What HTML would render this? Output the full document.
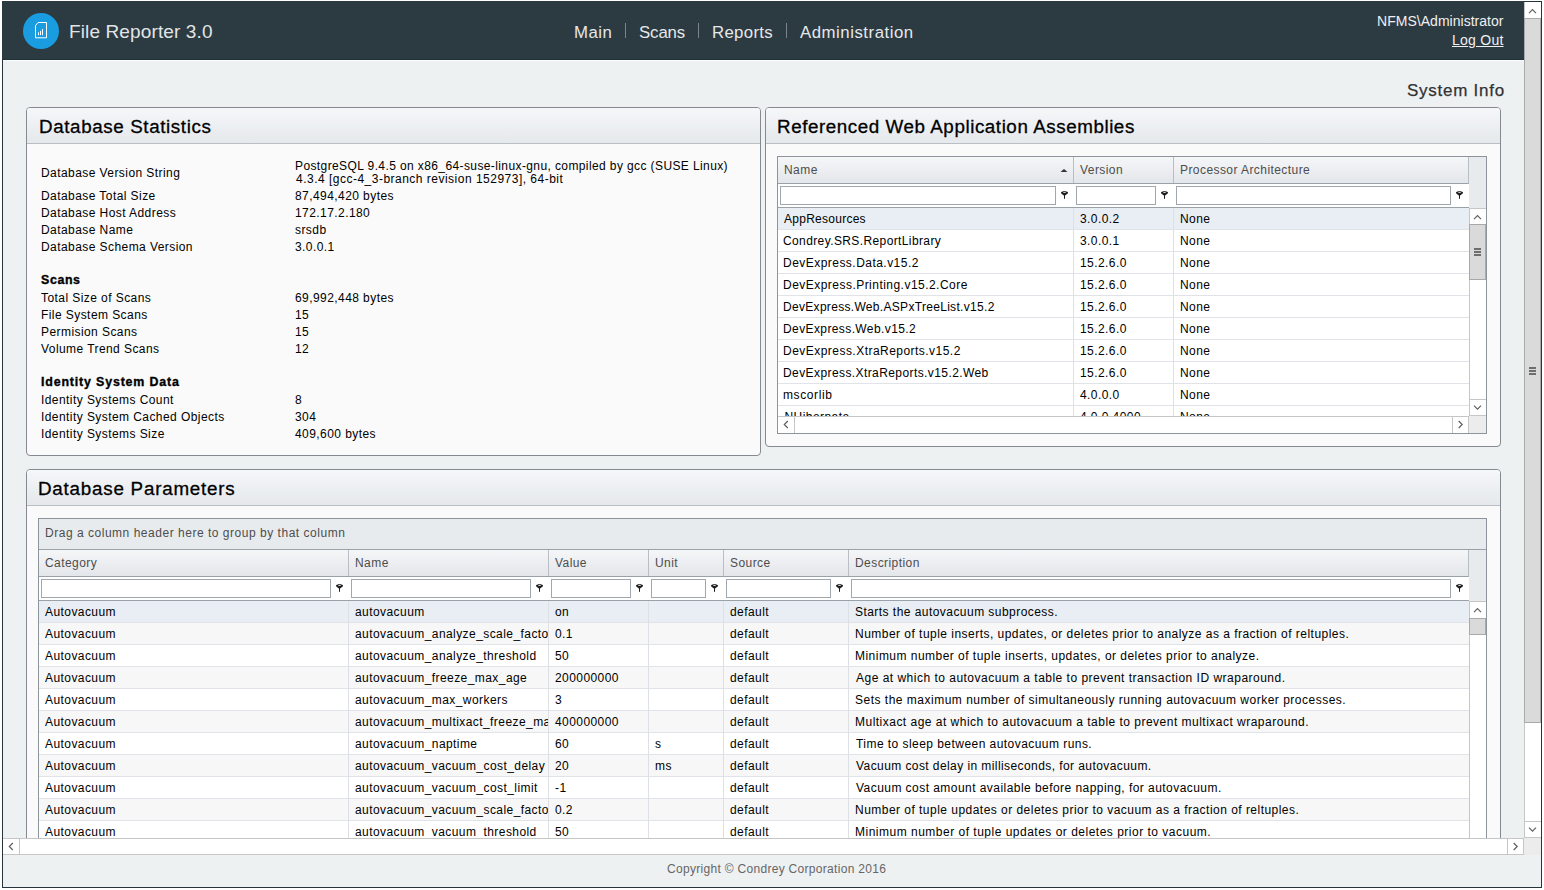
<!DOCTYPE html>
<html><head><meta charset="utf-8"><style>
*{box-sizing:border-box;margin:0;padding:0}
html,body{width:1544px;height:890px;overflow:hidden;background:#fff;font-family:"Liberation Sans",sans-serif;color:#000}
.a{position:absolute}
.t{position:absolute;white-space:nowrap}
.nav{font-size:17px;color:#f2f2f2;line-height:20px}
.sep{position:absolute;width:1px;height:15px;background:#76818a}
.panel{position:absolute;border:1px solid #858a90;border-radius:4px;background:#fafafa;overflow:hidden}
.ph{position:absolute;left:0;top:0;right:0;height:36px;background:linear-gradient(#f5f7f9,#e5e8ec);border-bottom:1px solid #b9bec4}
.lbl{font-size:12.8px;line-height:15px;color:#000}
.grid{position:absolute;border:1px solid #8d949c;background:#fff;overflow:hidden}
.gh{position:absolute;background:linear-gradient(#f5f6f8,#e3e6ea);border-bottom:1px solid #9ba1a8}
.ght{font-size:12.8px;line-height:15px;color:#4d4d4d}
.cd{position:absolute;width:1px;background:#c4c9cf}
.inp{position:absolute;height:19px;border:1px solid #a0a6ae;background:#fff}
.rowb{position:absolute;height:1px;background:#e1e5e9}
.cell{font-size:12.8px;line-height:15px;color:#000}
.arr{position:absolute;background:#fff}
</style></head><body>
<div class="a" style="left:2px;top:1px;width:1540px;height:887px;border:1px solid #26343c;background:#eef1f2"></div>
<div class="a" style="left:2px;top:1px;width:1522px;height:59px;background:#2c3a42;border-bottom:1px solid #22303a"></div>
<div class="a" style="left:3px;top:60px;width:1521px;height:1px;background:#fbfcfd"></div>
<div class="a" style="left:23px;top:13px;width:36px;height:36px;border-radius:50%;background:#1a9de0"></div>
<svg class="a" style="left:23px;top:13px" width="36" height="36" viewBox="0 0 36 36">
<path d="M12.5 12.6 L15 9.5 L23.5 9.5 L23.5 24.8 L12.5 24.8 Z" fill="none" stroke="#fff" stroke-width="1"/>
<rect x="15" y="19.3" width="1" height="2.8" fill="#fff"/>
<rect x="17" y="17.8" width="1" height="4.3" fill="#fff"/>
<rect x="19" y="16.1" width="1" height="6" fill="#fff"/>
</svg>
<div class="t" style="left:69px;top:20.22px;font-size:19px;line-height:23px;letter-spacing:0.125px;color:#e2e5e7">File Reporter 3.0</div>
<div class="t" style="left:574px;top:22.78px;font-size:16.8px;line-height:20px;letter-spacing:0.500px;color:#e6e8ea">Main</div>
<div class="t" style="left:639px;top:22.78px;font-size:16.8px;line-height:20px;letter-spacing:-0.100px;color:#e6e8ea">Scans</div>
<div class="t" style="left:712px;top:22.78px;font-size:16.8px;line-height:20px;letter-spacing:0.333px;color:#e6e8ea">Reports</div>
<div class="t" style="left:800px;top:22.78px;font-size:16.8px;line-height:20px;letter-spacing:0.523px;color:#e6e8ea">Administration</div>
<div class="a" style="left:625px;top:23px;width:1px;height:15px;background:#7a848c"></div>
<div class="a" style="left:698px;top:23px;width:1px;height:15px;background:#7a848c"></div>
<div class="a" style="left:786px;top:23px;width:1px;height:15px;background:#7a848c"></div>
<div class="t" style="left:1377px;top:12.65px;font-size:14px;line-height:17px;letter-spacing:0.029px;color:#f0f0f0">NFMS\Administrator</div>
<div class="t" style="left:1452px;top:31.65px;font-size:14px;line-height:17px;letter-spacing:0.250px;color:#f0f0f0;text-decoration:underline">Log Out</div>
<div class="t" style="left:1407px;top:81.11px;font-size:17px;line-height:20px;letter-spacing:0.740px;color:#333;-webkit-text-stroke:0.25px #333">System Info</div>
<div class="panel" style="left:26px;top:107px;width:735px;height:349px"><div class="ph"></div></div>
<div class="t" style="left:39px;top:114.99px;font-size:18.8px;line-height:23px;letter-spacing:0.617px;color:#000;-webkit-text-stroke:0.3px #000">Database Statistics</div>
<div class="t" style="left:41px;top:165.84px;font-size:12.0px;line-height:14px;letter-spacing:0.43px;color:#000">Database Version String</div>
<div class="t" style="left:41px;top:188.84px;font-size:12.0px;line-height:14px;letter-spacing:0.43px;color:#000">Database Total Size</div>
<div class="t" style="left:295px;top:188.84px;font-size:12.0px;line-height:14px;letter-spacing:0.43px;color:#000">87,494,420 bytes</div>
<div class="t" style="left:41px;top:205.84px;font-size:12.0px;line-height:14px;letter-spacing:0.43px;color:#000">Database Host Address</div>
<div class="t" style="left:295px;top:205.84px;font-size:12.0px;line-height:14px;letter-spacing:0.43px;color:#000">172.17.2.180</div>
<div class="t" style="left:41px;top:222.84px;font-size:12.0px;line-height:14px;letter-spacing:0.43px;color:#000">Database Name</div>
<div class="t" style="left:295px;top:222.84px;font-size:12.0px;line-height:14px;letter-spacing:0.43px;color:#000">srsdb</div>
<div class="t" style="left:41px;top:239.84px;font-size:12.0px;line-height:14px;letter-spacing:0.43px;color:#000">Database Schema Version</div>
<div class="t" style="left:295px;top:239.84px;font-size:12.0px;line-height:14px;letter-spacing:0.43px;color:#000">3.0.0.1</div>
<div class="t" style="left:41px;top:273.20px;font-size:12.4px;line-height:15px;letter-spacing:0.625px;font-weight:700;color:#000;-webkit-text-stroke:0.35px #000">Scans</div>
<div class="t" style="left:41px;top:290.84px;font-size:12.0px;line-height:14px;letter-spacing:0.43px;color:#000">Total Size of Scans</div>
<div class="t" style="left:295px;top:290.84px;font-size:12.0px;line-height:14px;letter-spacing:0.43px;color:#000">69,992,448 bytes</div>
<div class="t" style="left:41px;top:307.84px;font-size:12.0px;line-height:14px;letter-spacing:0.43px;color:#000">File System Scans</div>
<div class="t" style="left:295px;top:307.84px;font-size:12.0px;line-height:14px;letter-spacing:0.43px;color:#000">15</div>
<div class="t" style="left:41px;top:324.84px;font-size:12.0px;line-height:14px;letter-spacing:0.43px;color:#000">Permision Scans</div>
<div class="t" style="left:295px;top:324.84px;font-size:12.0px;line-height:14px;letter-spacing:0.43px;color:#000">15</div>
<div class="t" style="left:41px;top:341.84px;font-size:12.0px;line-height:14px;letter-spacing:0.43px;color:#000">Volume Trend Scans</div>
<div class="t" style="left:295px;top:341.84px;font-size:12.0px;line-height:14px;letter-spacing:0.43px;color:#000">12</div>
<div class="t" style="left:41px;top:375.20px;font-size:12.4px;line-height:15px;letter-spacing:0.842px;font-weight:700;color:#000;-webkit-text-stroke:0.35px #000">Identity System Data</div>
<div class="t" style="left:41px;top:392.84px;font-size:12.0px;line-height:14px;letter-spacing:0.43px;color:#000">Identity Systems Count</div>
<div class="t" style="left:295px;top:392.84px;font-size:12.0px;line-height:14px;letter-spacing:0.43px;color:#000">8</div>
<div class="t" style="left:41px;top:409.84px;font-size:12.0px;line-height:14px;letter-spacing:0.43px;color:#000">Identity System Cached Objects</div>
<div class="t" style="left:295px;top:409.84px;font-size:12.0px;line-height:14px;letter-spacing:0.43px;color:#000">304</div>
<div class="t" style="left:41px;top:426.84px;font-size:12.0px;line-height:14px;letter-spacing:0.43px;color:#000">Identity Systems Size</div>
<div class="t" style="left:295px;top:426.84px;font-size:12.0px;line-height:14px;letter-spacing:0.43px;color:#000">409,600 bytes</div>
<div class="t" style="left:295px;top:158.84px;font-size:12.0px;line-height:14px;letter-spacing:0.393px;color:#000">PostgreSQL 9.4.5 on x86_64-suse-linux-gnu, compiled by gcc (SUSE Linux)</div>
<div class="t" style="left:296px;top:171.84px;font-size:12.0px;line-height:14px;letter-spacing:0.489px;color:#000">4.3.4 [gcc-4_3-branch revision 152973], 64-bit</div>
<div class="panel" style="left:765px;top:107px;width:736px;height:340px"><div class="ph"></div></div>
<div class="t" style="left:777px;top:114.99px;font-size:18.8px;line-height:23px;letter-spacing:0.567px;color:#000;-webkit-text-stroke:0.3px #000">Referenced Web Application Assemblies</div>
<div class="a" style="left:777px;top:156px;width:710px;height:278px;border:1px solid #8d949c;background:#fff"></div>
<div class="a" style="left:1469px;top:157px;width:17px;height:51px;background:#e8ebee"></div>
<div class="a" style="left:778px;top:157px;width:691px;height:27px;background:linear-gradient(#f5f6f8,#e3e6ea);border-bottom:1px solid #9ba1a8;border-right:1px solid #b9bec4"></div>
<div class="a" style="left:1073px;top:157px;width:1px;height:26px;background:#b9bec4"></div>
<div class="a" style="left:1173px;top:157px;width:1px;height:26px;background:#b9bec4"></div>
<div class="t" style="left:784px;top:162.84px;font-size:12.0px;line-height:14px;letter-spacing:0.43px;color:#4d4d4d">Name</div>
<div class="t" style="left:1080px;top:162.84px;font-size:12.0px;line-height:14px;letter-spacing:0.43px;color:#4d4d4d">Version</div>
<div class="t" style="left:1180px;top:162.84px;font-size:12.0px;line-height:14px;letter-spacing:0.43px;color:#4d4d4d">Processor Architecture</div>
<svg class="a" style="left:1060px;top:169px" width="8" height="4"><path d="M0.5,3 L4,0 L7.5,3 Z" fill="#333"/></svg>
<div class="a" style="left:778px;top:184px;width:691px;height:24px;background:#fff;border-bottom:1px solid #9ba1a8"></div>
<div class="a" style="left:780px;top:186px;width:276px;height:19px;border:1px solid #a0a6ae;background:#fff"></div>
<div class="a" style="left:1076px;top:186px;width:80px;height:19px;border:1px solid #a0a6ae;background:#fff"></div>
<div class="a" style="left:1176px;top:186px;width:275px;height:19px;border:1px solid #a0a6ae;background:#fff"></div>
<div class="a" style="left:1060px;top:191px;width:9px;height:10px;line-height:0"><svg width="9" height="10" viewBox="0 0 9 10"><path d="M1,1.8 C1,0.8 2.5,0.3 4.5,0.3 C6.5,0.3 8,0.8 8,1.8 C8,2.6 6.4,3.6 5.1,4.6 L3.9,4.6 C2.6,3.6 1,2.6 1,1.8 Z" fill="#1e1e1e"/><ellipse cx="4.5" cy="1.5" rx="1.5" ry="0.5" fill="#d8d8d8"/><rect x="4" y="4" width="1" height="3.8" fill="#1e1e1e"/></svg></div>
<div class="a" style="left:1160px;top:191px;width:9px;height:10px;line-height:0"><svg width="9" height="10" viewBox="0 0 9 10"><path d="M1,1.8 C1,0.8 2.5,0.3 4.5,0.3 C6.5,0.3 8,0.8 8,1.8 C8,2.6 6.4,3.6 5.1,4.6 L3.9,4.6 C2.6,3.6 1,2.6 1,1.8 Z" fill="#1e1e1e"/><ellipse cx="4.5" cy="1.5" rx="1.5" ry="0.5" fill="#d8d8d8"/><rect x="4" y="4" width="1" height="3.8" fill="#1e1e1e"/></svg></div>
<div class="a" style="left:1455px;top:191px;width:9px;height:10px;line-height:0"><svg width="9" height="10" viewBox="0 0 9 10"><path d="M1,1.8 C1,0.8 2.5,0.3 4.5,0.3 C6.5,0.3 8,0.8 8,1.8 C8,2.6 6.4,3.6 5.1,4.6 L3.9,4.6 C2.6,3.6 1,2.6 1,1.8 Z" fill="#1e1e1e"/><ellipse cx="4.5" cy="1.5" rx="1.5" ry="0.5" fill="#d8d8d8"/><rect x="4" y="4" width="1" height="3.8" fill="#1e1e1e"/></svg></div>
<div class="a" style="left:778px;top:208px;width:691px;height:208px;overflow:hidden">
<div class="a" style="left:0;top:0px;width:691px;height:22px;background:#e8eef4;border-bottom:1px solid #e0e4e8"></div>
<div class="a" style="left:295px;top:0px;width:1px;height:22px;background:#dde1e5"></div>
<div class="a" style="left:395px;top:0px;width:1px;height:22px;background:#dde1e5"></div>
<div class="t" style="left:6px;top:3.84px;font-size:12.0px;line-height:14px;letter-spacing:0.264px;color:#000">AppResources</div>
<div class="t" style="left:302px;top:3.84px;font-size:12.0px;line-height:14px;letter-spacing:0.43px;color:#000">3.0.0.2</div>
<div class="t" style="left:402px;top:3.84px;font-size:12.0px;line-height:14px;letter-spacing:0.43px;color:#000">None</div>
<div class="a" style="left:0;top:22px;width:691px;height:22px;background:#fff;border-bottom:1px solid #e0e4e8"></div>
<div class="a" style="left:295px;top:22px;width:1px;height:22px;background:#dde1e5"></div>
<div class="a" style="left:395px;top:22px;width:1px;height:22px;background:#dde1e5"></div>
<div class="t" style="left:5px;top:25.84px;font-size:12.0px;line-height:14px;letter-spacing:0.387px;color:#000">Condrey.SRS.ReportLibrary</div>
<div class="t" style="left:302px;top:25.84px;font-size:12.0px;line-height:14px;letter-spacing:0.43px;color:#000">3.0.0.1</div>
<div class="t" style="left:402px;top:25.84px;font-size:12.0px;line-height:14px;letter-spacing:0.43px;color:#000">None</div>
<div class="a" style="left:0;top:44px;width:691px;height:22px;background:#fff;border-bottom:1px solid #e0e4e8"></div>
<div class="a" style="left:295px;top:44px;width:1px;height:22px;background:#dde1e5"></div>
<div class="a" style="left:395px;top:44px;width:1px;height:22px;background:#dde1e5"></div>
<div class="t" style="left:5px;top:47.84px;font-size:12.0px;line-height:14px;letter-spacing:0.465px;color:#000">DevExpress.Data.v15.2</div>
<div class="t" style="left:302px;top:47.84px;font-size:12.0px;line-height:14px;letter-spacing:0.43px;color:#000">15.2.6.0</div>
<div class="t" style="left:402px;top:47.84px;font-size:12.0px;line-height:14px;letter-spacing:0.43px;color:#000">None</div>
<div class="a" style="left:0;top:66px;width:691px;height:22px;background:#fff;border-bottom:1px solid #e0e4e8"></div>
<div class="a" style="left:295px;top:66px;width:1px;height:22px;background:#dde1e5"></div>
<div class="a" style="left:395px;top:66px;width:1px;height:22px;background:#dde1e5"></div>
<div class="t" style="left:5px;top:69.84px;font-size:12.0px;line-height:14px;letter-spacing:0.469px;color:#000">DevExpress.Printing.v15.2.Core</div>
<div class="t" style="left:302px;top:69.84px;font-size:12.0px;line-height:14px;letter-spacing:0.43px;color:#000">15.2.6.0</div>
<div class="t" style="left:402px;top:69.84px;font-size:12.0px;line-height:14px;letter-spacing:0.43px;color:#000">None</div>
<div class="a" style="left:0;top:88px;width:691px;height:22px;background:#fff;border-bottom:1px solid #e0e4e8"></div>
<div class="a" style="left:295px;top:88px;width:1px;height:22px;background:#dde1e5"></div>
<div class="a" style="left:395px;top:88px;width:1px;height:22px;background:#dde1e5"></div>
<div class="t" style="left:5px;top:91.84px;font-size:12.0px;line-height:14px;letter-spacing:0.309px;color:#000">DevExpress.Web.ASPxTreeList.v15.2</div>
<div class="t" style="left:302px;top:91.84px;font-size:12.0px;line-height:14px;letter-spacing:0.43px;color:#000">15.2.6.0</div>
<div class="t" style="left:402px;top:91.84px;font-size:12.0px;line-height:14px;letter-spacing:0.43px;color:#000">None</div>
<div class="a" style="left:0;top:110px;width:691px;height:22px;background:#fff;border-bottom:1px solid #e0e4e8"></div>
<div class="a" style="left:295px;top:110px;width:1px;height:22px;background:#dde1e5"></div>
<div class="a" style="left:395px;top:110px;width:1px;height:22px;background:#dde1e5"></div>
<div class="t" style="left:5px;top:113.84px;font-size:12.0px;line-height:14px;letter-spacing:0.395px;color:#000">DevExpress.Web.v15.2</div>
<div class="t" style="left:302px;top:113.84px;font-size:12.0px;line-height:14px;letter-spacing:0.43px;color:#000">15.2.6.0</div>
<div class="t" style="left:402px;top:113.84px;font-size:12.0px;line-height:14px;letter-spacing:0.43px;color:#000">None</div>
<div class="a" style="left:0;top:132px;width:691px;height:22px;background:#fff;border-bottom:1px solid #e0e4e8"></div>
<div class="a" style="left:295px;top:132px;width:1px;height:22px;background:#dde1e5"></div>
<div class="a" style="left:395px;top:132px;width:1px;height:22px;background:#dde1e5"></div>
<div class="t" style="left:5px;top:135.84px;font-size:12.0px;line-height:14px;letter-spacing:0.467px;color:#000">DevExpress.XtraReports.v15.2</div>
<div class="t" style="left:302px;top:135.84px;font-size:12.0px;line-height:14px;letter-spacing:0.43px;color:#000">15.2.6.0</div>
<div class="t" style="left:402px;top:135.84px;font-size:12.0px;line-height:14px;letter-spacing:0.43px;color:#000">None</div>
<div class="a" style="left:0;top:154px;width:691px;height:22px;background:#fff;border-bottom:1px solid #e0e4e8"></div>
<div class="a" style="left:295px;top:154px;width:1px;height:22px;background:#dde1e5"></div>
<div class="a" style="left:395px;top:154px;width:1px;height:22px;background:#dde1e5"></div>
<div class="t" style="left:5px;top:157.84px;font-size:12.0px;line-height:14px;letter-spacing:0.410px;color:#000">DevExpress.XtraReports.v15.2.Web</div>
<div class="t" style="left:302px;top:157.84px;font-size:12.0px;line-height:14px;letter-spacing:0.43px;color:#000">15.2.6.0</div>
<div class="t" style="left:402px;top:157.84px;font-size:12.0px;line-height:14px;letter-spacing:0.43px;color:#000">None</div>
<div class="a" style="left:0;top:176px;width:691px;height:22px;background:#fff;border-bottom:1px solid #e0e4e8"></div>
<div class="a" style="left:295px;top:176px;width:1px;height:22px;background:#dde1e5"></div>
<div class="a" style="left:395px;top:176px;width:1px;height:22px;background:#dde1e5"></div>
<div class="t" style="left:5px;top:179.84px;font-size:12.0px;line-height:14px;letter-spacing:0.600px;color:#000">mscorlib</div>
<div class="t" style="left:302px;top:179.84px;font-size:12.0px;line-height:14px;letter-spacing:0.43px;color:#000">4.0.0.0</div>
<div class="t" style="left:402px;top:179.84px;font-size:12.0px;line-height:14px;letter-spacing:0.43px;color:#000">None</div>
<div class="a" style="left:0;top:198px;width:691px;height:22px;background:#fff;border-bottom:1px solid #e0e4e8"></div>
<div class="a" style="left:295px;top:198px;width:1px;height:22px;background:#dde1e5"></div>
<div class="a" style="left:395px;top:198px;width:1px;height:22px;background:#dde1e5"></div>
<div class="t" style="left:6.5px;top:201.84px;font-size:12.0px;line-height:14px;letter-spacing:0.43px;color:#000">NHibernate</div>
<div class="t" style="left:302px;top:201.84px;font-size:12.0px;line-height:14px;letter-spacing:0.43px;color:#000">4.0.0.4000</div>
<div class="t" style="left:402px;top:201.84px;font-size:12.0px;line-height:14px;letter-spacing:0.43px;color:#000">None</div>
</div>
<div class="a" style="left:1469px;top:208px;width:17px;height:208px;background:#fff;border-left:1px solid #c6c6c6;border-top:1px solid #c6c6c6"></div>
<svg class="a" style="left:0;top:0;overflow:visible" width="1" height="1"><path d="M1474.0,219.10000000000002 L1477.5,215.60000000000002 L1481.0,219.10000000000002" fill="none" stroke="#606060" stroke-width="1.2"/></svg>
<svg class="a" style="left:0;top:0;overflow:visible" width="1" height="1"><path d="M1474.0,405.7 L1477.5,409.2 L1481.0,405.7" fill="none" stroke="#606060" stroke-width="1.2"/></svg>
<div class="a" style="left:1469px;top:399px;width:17px;height:1px;background:#c6c6c6"></div>
<div class="a" style="left:1469px;top:415px;width:17px;height:1px;background:#c6c6c6"></div>
<div class="a" style="left:1469px;top:224px;width:17px;height:56px;background:#dadada;border:1px solid #a9a9a9"></div>
<div class="a" style="left:1474px;top:248px;width:7px;height:2px;background:#6e6e6e"></div>
<div class="a" style="left:1474px;top:251px;width:7px;height:2px;background:#6e6e6e"></div>
<div class="a" style="left:1474px;top:254px;width:7px;height:2px;background:#6e6e6e"></div>
<div class="a" style="left:778px;top:416px;width:691px;height:17px;background:#fff;border-top:1px solid #c6c6c6"></div>
<div class="a" style="left:794px;top:416px;width:1px;height:17px;background:#c6c6c6"></div>
<div class="a" style="left:1452px;top:416px;width:1px;height:17px;background:#c6c6c6"></div>
<div class="a" style="left:1468px;top:416px;width:1px;height:17px;background:#c6c6c6"></div>
<svg class="a" style="left:0;top:0;overflow:visible" width="1" height="1"><path d="M787.8,421.0 L784.3,424.5 L787.8,428.0" fill="none" stroke="#606060" stroke-width="1.2"/></svg>
<svg class="a" style="left:0;top:0;overflow:visible" width="1" height="1"><path d="M1458.7,421.0 L1462.2,424.5 L1458.7,428.0" fill="none" stroke="#606060" stroke-width="1.2"/></svg>
<div class="a" style="left:1469px;top:416px;width:17px;height:17px;background:#ececec"></div>
<div class="a" style="left:0;top:0;width:1524px;height:838px;overflow:hidden">
<div class="panel" style="left:26px;top:469px;width:1475px;height:600px"><div class="ph"></div></div>
<div class="t" style="left:38px;top:476.99px;font-size:18.8px;line-height:23px;letter-spacing:0.778px;color:#000;-webkit-text-stroke:0.3px #000">Database Parameters</div>
<div class="a" style="left:38px;top:518px;width:1449px;height:400px;border:1px solid #8d949c;background:#fff"></div>
<div class="a" style="left:39px;top:519px;width:1447px;height:31px;background:#e8ebee;border-bottom:1px solid #9ba1a8"></div>
<div class="t" style="left:45px;top:525.84px;font-size:12.0px;line-height:14px;letter-spacing:0.521px;color:#4d4d4d">Drag a column header here to group by that column</div>
<div class="a" style="left:1469px;top:550px;width:17px;height:51px;background:#e8ebee"></div>
<div class="a" style="left:39px;top:550px;width:1430px;height:27px;background:linear-gradient(#f5f6f8,#e3e6ea);border-bottom:1px solid #9ba1a8;border-right:1px solid #b9bec4"></div>
<div class="a" style="left:348px;top:550px;width:1px;height:26px;background:#b9bec4"></div>
<div class="a" style="left:548px;top:550px;width:1px;height:26px;background:#b9bec4"></div>
<div class="a" style="left:648px;top:550px;width:1px;height:26px;background:#b9bec4"></div>
<div class="a" style="left:723px;top:550px;width:1px;height:26px;background:#b9bec4"></div>
<div class="a" style="left:848px;top:550px;width:1px;height:26px;background:#b9bec4"></div>
<div class="t" style="left:45px;top:555.84px;font-size:12.0px;line-height:14px;letter-spacing:0.43px;color:#4d4d4d">Category</div>
<div class="t" style="left:355px;top:555.84px;font-size:12.0px;line-height:14px;letter-spacing:0.43px;color:#4d4d4d">Name</div>
<div class="t" style="left:555px;top:555.84px;font-size:12.0px;line-height:14px;letter-spacing:0.43px;color:#4d4d4d">Value</div>
<div class="t" style="left:655px;top:555.84px;font-size:12.0px;line-height:14px;letter-spacing:0.43px;color:#4d4d4d">Unit</div>
<div class="t" style="left:730px;top:555.84px;font-size:12.0px;line-height:14px;letter-spacing:0.43px;color:#4d4d4d">Source</div>
<div class="t" style="left:855px;top:555.84px;font-size:12.0px;line-height:14px;letter-spacing:0.43px;color:#4d4d4d">Description</div>
<div class="a" style="left:39px;top:577px;width:1430px;height:24px;background:#fff;border-bottom:1px solid #9ba1a8"></div>
<div class="a" style="left:41px;top:579px;width:290px;height:19px;border:1px solid #a0a6ae;background:#fff"></div>
<div class="a" style="left:335px;top:584px;width:9px;height:10px;line-height:0"><svg width="9" height="10" viewBox="0 0 9 10"><path d="M1,1.8 C1,0.8 2.5,0.3 4.5,0.3 C6.5,0.3 8,0.8 8,1.8 C8,2.6 6.4,3.6 5.1,4.6 L3.9,4.6 C2.6,3.6 1,2.6 1,1.8 Z" fill="#1e1e1e"/><ellipse cx="4.5" cy="1.5" rx="1.5" ry="0.5" fill="#d8d8d8"/><rect x="4" y="4" width="1" height="3.8" fill="#1e1e1e"/></svg></div>
<div class="a" style="left:351px;top:579px;width:180px;height:19px;border:1px solid #a0a6ae;background:#fff"></div>
<div class="a" style="left:535px;top:584px;width:9px;height:10px;line-height:0"><svg width="9" height="10" viewBox="0 0 9 10"><path d="M1,1.8 C1,0.8 2.5,0.3 4.5,0.3 C6.5,0.3 8,0.8 8,1.8 C8,2.6 6.4,3.6 5.1,4.6 L3.9,4.6 C2.6,3.6 1,2.6 1,1.8 Z" fill="#1e1e1e"/><ellipse cx="4.5" cy="1.5" rx="1.5" ry="0.5" fill="#d8d8d8"/><rect x="4" y="4" width="1" height="3.8" fill="#1e1e1e"/></svg></div>
<div class="a" style="left:551px;top:579px;width:80px;height:19px;border:1px solid #a0a6ae;background:#fff"></div>
<div class="a" style="left:635px;top:584px;width:9px;height:10px;line-height:0"><svg width="9" height="10" viewBox="0 0 9 10"><path d="M1,1.8 C1,0.8 2.5,0.3 4.5,0.3 C6.5,0.3 8,0.8 8,1.8 C8,2.6 6.4,3.6 5.1,4.6 L3.9,4.6 C2.6,3.6 1,2.6 1,1.8 Z" fill="#1e1e1e"/><ellipse cx="4.5" cy="1.5" rx="1.5" ry="0.5" fill="#d8d8d8"/><rect x="4" y="4" width="1" height="3.8" fill="#1e1e1e"/></svg></div>
<div class="a" style="left:651px;top:579px;width:55px;height:19px;border:1px solid #a0a6ae;background:#fff"></div>
<div class="a" style="left:710px;top:584px;width:9px;height:10px;line-height:0"><svg width="9" height="10" viewBox="0 0 9 10"><path d="M1,1.8 C1,0.8 2.5,0.3 4.5,0.3 C6.5,0.3 8,0.8 8,1.8 C8,2.6 6.4,3.6 5.1,4.6 L3.9,4.6 C2.6,3.6 1,2.6 1,1.8 Z" fill="#1e1e1e"/><ellipse cx="4.5" cy="1.5" rx="1.5" ry="0.5" fill="#d8d8d8"/><rect x="4" y="4" width="1" height="3.8" fill="#1e1e1e"/></svg></div>
<div class="a" style="left:726px;top:579px;width:105px;height:19px;border:1px solid #a0a6ae;background:#fff"></div>
<div class="a" style="left:835px;top:584px;width:9px;height:10px;line-height:0"><svg width="9" height="10" viewBox="0 0 9 10"><path d="M1,1.8 C1,0.8 2.5,0.3 4.5,0.3 C6.5,0.3 8,0.8 8,1.8 C8,2.6 6.4,3.6 5.1,4.6 L3.9,4.6 C2.6,3.6 1,2.6 1,1.8 Z" fill="#1e1e1e"/><ellipse cx="4.5" cy="1.5" rx="1.5" ry="0.5" fill="#d8d8d8"/><rect x="4" y="4" width="1" height="3.8" fill="#1e1e1e"/></svg></div>
<div class="a" style="left:851px;top:579px;width:600px;height:19px;border:1px solid #a0a6ae;background:#fff"></div>
<div class="a" style="left:1455px;top:584px;width:9px;height:10px;line-height:0"><svg width="9" height="10" viewBox="0 0 9 10"><path d="M1,1.8 C1,0.8 2.5,0.3 4.5,0.3 C6.5,0.3 8,0.8 8,1.8 C8,2.6 6.4,3.6 5.1,4.6 L3.9,4.6 C2.6,3.6 1,2.6 1,1.8 Z" fill="#1e1e1e"/><ellipse cx="4.5" cy="1.5" rx="1.5" ry="0.5" fill="#d8d8d8"/><rect x="4" y="4" width="1" height="3.8" fill="#1e1e1e"/></svg></div>
<div class="a" style="left:39px;top:601px;width:1430px;height:300px;overflow:hidden">
<div class="a" style="left:0;top:0px;width:1430px;height:22px;background:#e8eef4;border-bottom:1px solid #e0e4e8"></div>
<div class="a" style="left:-1px;top:0px;width:310px;height:21px;overflow:hidden">
<div class="t" style="left:7px;top:3.84px;font-size:12.0px;line-height:14px;letter-spacing:0.43px;color:#000">Autovacuum</div>
</div>
<div class="a" style="left:309px;top:0px;width:1px;height:22px;background:#dde1e5"></div>
<div class="a" style="left:309px;top:0px;width:200px;height:21px;overflow:hidden">
<div class="t" style="left:7px;top:3.84px;font-size:12.0px;line-height:14px;letter-spacing:0.43px;color:#000">autovacuum</div>
</div>
<div class="a" style="left:509px;top:0px;width:1px;height:22px;background:#dde1e5"></div>
<div class="a" style="left:509px;top:0px;width:100px;height:21px;overflow:hidden">
<div class="t" style="left:7px;top:3.84px;font-size:12.0px;line-height:14px;letter-spacing:0.43px;color:#000">on</div>
</div>
<div class="a" style="left:609px;top:0px;width:1px;height:22px;background:#dde1e5"></div>
<div class="a" style="left:609px;top:0px;width:75px;height:21px;overflow:hidden">
<div class="t" style="left:7px;top:3.84px;font-size:12.0px;line-height:14px;letter-spacing:0.43px;color:#000"></div>
</div>
<div class="a" style="left:684px;top:0px;width:1px;height:22px;background:#dde1e5"></div>
<div class="a" style="left:684px;top:0px;width:125px;height:21px;overflow:hidden">
<div class="t" style="left:7px;top:3.84px;font-size:12.0px;line-height:14px;letter-spacing:0.43px;color:#000">default</div>
</div>
<div class="a" style="left:809px;top:0px;width:1px;height:22px;background:#dde1e5"></div>
<div class="a" style="left:809px;top:0px;width:620px;height:21px;overflow:hidden">
<div class="t" style="left:7px;top:3.84px;font-size:12.0px;line-height:14px;letter-spacing:0.453px;color:#000">Starts the autovacuum subprocess.</div>
</div>
<div class="a" style="left:0;top:22px;width:1430px;height:22px;background:#f7f7f7;border-bottom:1px solid #e0e4e8"></div>
<div class="a" style="left:-1px;top:22px;width:310px;height:21px;overflow:hidden">
<div class="t" style="left:7px;top:3.84px;font-size:12.0px;line-height:14px;letter-spacing:0.43px;color:#000">Autovacuum</div>
</div>
<div class="a" style="left:309px;top:22px;width:1px;height:22px;background:#dde1e5"></div>
<div class="a" style="left:309px;top:22px;width:200px;height:21px;overflow:hidden">
<div class="t" style="left:7px;top:3.84px;font-size:12.0px;line-height:14px;letter-spacing:0.43px;color:#000">autovacuum_analyze_scale_factor</div>
</div>
<div class="a" style="left:509px;top:22px;width:1px;height:22px;background:#dde1e5"></div>
<div class="a" style="left:509px;top:22px;width:100px;height:21px;overflow:hidden">
<div class="t" style="left:7px;top:3.84px;font-size:12.0px;line-height:14px;letter-spacing:0.43px;color:#000">0.1</div>
</div>
<div class="a" style="left:609px;top:22px;width:1px;height:22px;background:#dde1e5"></div>
<div class="a" style="left:609px;top:22px;width:75px;height:21px;overflow:hidden">
<div class="t" style="left:7px;top:3.84px;font-size:12.0px;line-height:14px;letter-spacing:0.43px;color:#000"></div>
</div>
<div class="a" style="left:684px;top:22px;width:1px;height:22px;background:#dde1e5"></div>
<div class="a" style="left:684px;top:22px;width:125px;height:21px;overflow:hidden">
<div class="t" style="left:7px;top:3.84px;font-size:12.0px;line-height:14px;letter-spacing:0.43px;color:#000">default</div>
</div>
<div class="a" style="left:809px;top:22px;width:1px;height:22px;background:#dde1e5"></div>
<div class="a" style="left:809px;top:22px;width:620px;height:21px;overflow:hidden">
<div class="t" style="left:7px;top:3.84px;font-size:12.0px;line-height:14px;letter-spacing:0.472px;color:#000">Number of tuple inserts, updates, or deletes prior to analyze as a fraction of reltuples.</div>
</div>
<div class="a" style="left:0;top:44px;width:1430px;height:22px;background:#fff;border-bottom:1px solid #e0e4e8"></div>
<div class="a" style="left:-1px;top:44px;width:310px;height:21px;overflow:hidden">
<div class="t" style="left:7px;top:3.84px;font-size:12.0px;line-height:14px;letter-spacing:0.43px;color:#000">Autovacuum</div>
</div>
<div class="a" style="left:309px;top:44px;width:1px;height:22px;background:#dde1e5"></div>
<div class="a" style="left:309px;top:44px;width:200px;height:21px;overflow:hidden">
<div class="t" style="left:7px;top:3.84px;font-size:12.0px;line-height:14px;letter-spacing:0.43px;color:#000">autovacuum_analyze_threshold</div>
</div>
<div class="a" style="left:509px;top:44px;width:1px;height:22px;background:#dde1e5"></div>
<div class="a" style="left:509px;top:44px;width:100px;height:21px;overflow:hidden">
<div class="t" style="left:7px;top:3.84px;font-size:12.0px;line-height:14px;letter-spacing:0.43px;color:#000">50</div>
</div>
<div class="a" style="left:609px;top:44px;width:1px;height:22px;background:#dde1e5"></div>
<div class="a" style="left:609px;top:44px;width:75px;height:21px;overflow:hidden">
<div class="t" style="left:7px;top:3.84px;font-size:12.0px;line-height:14px;letter-spacing:0.43px;color:#000"></div>
</div>
<div class="a" style="left:684px;top:44px;width:1px;height:22px;background:#dde1e5"></div>
<div class="a" style="left:684px;top:44px;width:125px;height:21px;overflow:hidden">
<div class="t" style="left:7px;top:3.84px;font-size:12.0px;line-height:14px;letter-spacing:0.43px;color:#000">default</div>
</div>
<div class="a" style="left:809px;top:44px;width:1px;height:22px;background:#dde1e5"></div>
<div class="a" style="left:809px;top:44px;width:620px;height:21px;overflow:hidden">
<div class="t" style="left:7px;top:3.84px;font-size:12.0px;line-height:14px;letter-spacing:0.471px;color:#000">Minimum number of tuple inserts, updates, or deletes prior to analyze.</div>
</div>
<div class="a" style="left:0;top:66px;width:1430px;height:22px;background:#f7f7f7;border-bottom:1px solid #e0e4e8"></div>
<div class="a" style="left:-1px;top:66px;width:310px;height:21px;overflow:hidden">
<div class="t" style="left:7px;top:3.84px;font-size:12.0px;line-height:14px;letter-spacing:0.43px;color:#000">Autovacuum</div>
</div>
<div class="a" style="left:309px;top:66px;width:1px;height:22px;background:#dde1e5"></div>
<div class="a" style="left:309px;top:66px;width:200px;height:21px;overflow:hidden">
<div class="t" style="left:7px;top:3.84px;font-size:12.0px;line-height:14px;letter-spacing:0.43px;color:#000">autovacuum_freeze_max_age</div>
</div>
<div class="a" style="left:509px;top:66px;width:1px;height:22px;background:#dde1e5"></div>
<div class="a" style="left:509px;top:66px;width:100px;height:21px;overflow:hidden">
<div class="t" style="left:7px;top:3.84px;font-size:12.0px;line-height:14px;letter-spacing:0.43px;color:#000">200000000</div>
</div>
<div class="a" style="left:609px;top:66px;width:1px;height:22px;background:#dde1e5"></div>
<div class="a" style="left:609px;top:66px;width:75px;height:21px;overflow:hidden">
<div class="t" style="left:7px;top:3.84px;font-size:12.0px;line-height:14px;letter-spacing:0.43px;color:#000"></div>
</div>
<div class="a" style="left:684px;top:66px;width:1px;height:22px;background:#dde1e5"></div>
<div class="a" style="left:684px;top:66px;width:125px;height:21px;overflow:hidden">
<div class="t" style="left:7px;top:3.84px;font-size:12.0px;line-height:14px;letter-spacing:0.43px;color:#000">default</div>
</div>
<div class="a" style="left:809px;top:66px;width:1px;height:22px;background:#dde1e5"></div>
<div class="a" style="left:809px;top:66px;width:620px;height:21px;overflow:hidden">
<div class="t" style="left:8px;top:3.84px;font-size:12.0px;line-height:14px;letter-spacing:0.490px;color:#000">Age at which to autovacuum a table to prevent transaction ID wraparound.</div>
</div>
<div class="a" style="left:0;top:88px;width:1430px;height:22px;background:#fff;border-bottom:1px solid #e0e4e8"></div>
<div class="a" style="left:-1px;top:88px;width:310px;height:21px;overflow:hidden">
<div class="t" style="left:7px;top:3.84px;font-size:12.0px;line-height:14px;letter-spacing:0.43px;color:#000">Autovacuum</div>
</div>
<div class="a" style="left:309px;top:88px;width:1px;height:22px;background:#dde1e5"></div>
<div class="a" style="left:309px;top:88px;width:200px;height:21px;overflow:hidden">
<div class="t" style="left:7px;top:3.84px;font-size:12.0px;line-height:14px;letter-spacing:0.43px;color:#000">autovacuum_max_workers</div>
</div>
<div class="a" style="left:509px;top:88px;width:1px;height:22px;background:#dde1e5"></div>
<div class="a" style="left:509px;top:88px;width:100px;height:21px;overflow:hidden">
<div class="t" style="left:7px;top:3.84px;font-size:12.0px;line-height:14px;letter-spacing:0.43px;color:#000">3</div>
</div>
<div class="a" style="left:609px;top:88px;width:1px;height:22px;background:#dde1e5"></div>
<div class="a" style="left:609px;top:88px;width:75px;height:21px;overflow:hidden">
<div class="t" style="left:7px;top:3.84px;font-size:12.0px;line-height:14px;letter-spacing:0.43px;color:#000"></div>
</div>
<div class="a" style="left:684px;top:88px;width:1px;height:22px;background:#dde1e5"></div>
<div class="a" style="left:684px;top:88px;width:125px;height:21px;overflow:hidden">
<div class="t" style="left:7px;top:3.84px;font-size:12.0px;line-height:14px;letter-spacing:0.43px;color:#000">default</div>
</div>
<div class="a" style="left:809px;top:88px;width:1px;height:22px;background:#dde1e5"></div>
<div class="a" style="left:809px;top:88px;width:620px;height:21px;overflow:hidden">
<div class="t" style="left:7px;top:3.84px;font-size:12.0px;line-height:14px;letter-spacing:0.500px;color:#000">Sets the maximum number of simultaneously running autovacuum worker processes.</div>
</div>
<div class="a" style="left:0;top:110px;width:1430px;height:22px;background:#f7f7f7;border-bottom:1px solid #e0e4e8"></div>
<div class="a" style="left:-1px;top:110px;width:310px;height:21px;overflow:hidden">
<div class="t" style="left:7px;top:3.84px;font-size:12.0px;line-height:14px;letter-spacing:0.43px;color:#000">Autovacuum</div>
</div>
<div class="a" style="left:309px;top:110px;width:1px;height:22px;background:#dde1e5"></div>
<div class="a" style="left:309px;top:110px;width:200px;height:21px;overflow:hidden">
<div class="t" style="left:7px;top:3.84px;font-size:12.0px;line-height:14px;letter-spacing:0.43px;color:#000">autovacuum_multixact_freeze_max_age</div>
</div>
<div class="a" style="left:509px;top:110px;width:1px;height:22px;background:#dde1e5"></div>
<div class="a" style="left:509px;top:110px;width:100px;height:21px;overflow:hidden">
<div class="t" style="left:7px;top:3.84px;font-size:12.0px;line-height:14px;letter-spacing:0.43px;color:#000">400000000</div>
</div>
<div class="a" style="left:609px;top:110px;width:1px;height:22px;background:#dde1e5"></div>
<div class="a" style="left:609px;top:110px;width:75px;height:21px;overflow:hidden">
<div class="t" style="left:7px;top:3.84px;font-size:12.0px;line-height:14px;letter-spacing:0.43px;color:#000"></div>
</div>
<div class="a" style="left:684px;top:110px;width:1px;height:22px;background:#dde1e5"></div>
<div class="a" style="left:684px;top:110px;width:125px;height:21px;overflow:hidden">
<div class="t" style="left:7px;top:3.84px;font-size:12.0px;line-height:14px;letter-spacing:0.43px;color:#000">default</div>
</div>
<div class="a" style="left:809px;top:110px;width:1px;height:22px;background:#dde1e5"></div>
<div class="a" style="left:809px;top:110px;width:620px;height:21px;overflow:hidden">
<div class="t" style="left:7px;top:3.84px;font-size:12.0px;line-height:14px;letter-spacing:0.483px;color:#000">Multixact age at which to autovacuum a table to prevent multixact wraparound.</div>
</div>
<div class="a" style="left:0;top:132px;width:1430px;height:22px;background:#fff;border-bottom:1px solid #e0e4e8"></div>
<div class="a" style="left:-1px;top:132px;width:310px;height:21px;overflow:hidden">
<div class="t" style="left:7px;top:3.84px;font-size:12.0px;line-height:14px;letter-spacing:0.43px;color:#000">Autovacuum</div>
</div>
<div class="a" style="left:309px;top:132px;width:1px;height:22px;background:#dde1e5"></div>
<div class="a" style="left:309px;top:132px;width:200px;height:21px;overflow:hidden">
<div class="t" style="left:7px;top:3.84px;font-size:12.0px;line-height:14px;letter-spacing:0.43px;color:#000">autovacuum_naptime</div>
</div>
<div class="a" style="left:509px;top:132px;width:1px;height:22px;background:#dde1e5"></div>
<div class="a" style="left:509px;top:132px;width:100px;height:21px;overflow:hidden">
<div class="t" style="left:7px;top:3.84px;font-size:12.0px;line-height:14px;letter-spacing:0.43px;color:#000">60</div>
</div>
<div class="a" style="left:609px;top:132px;width:1px;height:22px;background:#dde1e5"></div>
<div class="a" style="left:609px;top:132px;width:75px;height:21px;overflow:hidden">
<div class="t" style="left:7px;top:3.84px;font-size:12.0px;line-height:14px;letter-spacing:0.43px;color:#000">s</div>
</div>
<div class="a" style="left:684px;top:132px;width:1px;height:22px;background:#dde1e5"></div>
<div class="a" style="left:684px;top:132px;width:125px;height:21px;overflow:hidden">
<div class="t" style="left:7px;top:3.84px;font-size:12.0px;line-height:14px;letter-spacing:0.43px;color:#000">default</div>
</div>
<div class="a" style="left:809px;top:132px;width:1px;height:22px;background:#dde1e5"></div>
<div class="a" style="left:809px;top:132px;width:620px;height:21px;overflow:hidden">
<div class="t" style="left:8px;top:3.84px;font-size:12.0px;line-height:14px;letter-spacing:0.451px;color:#000">Time to sleep between autovacuum runs.</div>
</div>
<div class="a" style="left:0;top:154px;width:1430px;height:22px;background:#f7f7f7;border-bottom:1px solid #e0e4e8"></div>
<div class="a" style="left:-1px;top:154px;width:310px;height:21px;overflow:hidden">
<div class="t" style="left:7px;top:3.84px;font-size:12.0px;line-height:14px;letter-spacing:0.43px;color:#000">Autovacuum</div>
</div>
<div class="a" style="left:309px;top:154px;width:1px;height:22px;background:#dde1e5"></div>
<div class="a" style="left:309px;top:154px;width:200px;height:21px;overflow:hidden">
<div class="t" style="left:7px;top:3.84px;font-size:12.0px;line-height:14px;letter-spacing:0.43px;color:#000">autovacuum_vacuum_cost_delay</div>
</div>
<div class="a" style="left:509px;top:154px;width:1px;height:22px;background:#dde1e5"></div>
<div class="a" style="left:509px;top:154px;width:100px;height:21px;overflow:hidden">
<div class="t" style="left:7px;top:3.84px;font-size:12.0px;line-height:14px;letter-spacing:0.43px;color:#000">20</div>
</div>
<div class="a" style="left:609px;top:154px;width:1px;height:22px;background:#dde1e5"></div>
<div class="a" style="left:609px;top:154px;width:75px;height:21px;overflow:hidden">
<div class="t" style="left:7px;top:3.84px;font-size:12.0px;line-height:14px;letter-spacing:0.43px;color:#000">ms</div>
</div>
<div class="a" style="left:684px;top:154px;width:1px;height:22px;background:#dde1e5"></div>
<div class="a" style="left:684px;top:154px;width:125px;height:21px;overflow:hidden">
<div class="t" style="left:7px;top:3.84px;font-size:12.0px;line-height:14px;letter-spacing:0.43px;color:#000">default</div>
</div>
<div class="a" style="left:809px;top:154px;width:1px;height:22px;background:#dde1e5"></div>
<div class="a" style="left:809px;top:154px;width:620px;height:21px;overflow:hidden">
<div class="t" style="left:8px;top:3.84px;font-size:12.0px;line-height:14px;letter-spacing:0.420px;color:#000">Vacuum cost delay in milliseconds, for autovacuum.</div>
</div>
<div class="a" style="left:0;top:176px;width:1430px;height:22px;background:#fff;border-bottom:1px solid #e0e4e8"></div>
<div class="a" style="left:-1px;top:176px;width:310px;height:21px;overflow:hidden">
<div class="t" style="left:7px;top:3.84px;font-size:12.0px;line-height:14px;letter-spacing:0.43px;color:#000">Autovacuum</div>
</div>
<div class="a" style="left:309px;top:176px;width:1px;height:22px;background:#dde1e5"></div>
<div class="a" style="left:309px;top:176px;width:200px;height:21px;overflow:hidden">
<div class="t" style="left:7px;top:3.84px;font-size:12.0px;line-height:14px;letter-spacing:0.43px;color:#000">autovacuum_vacuum_cost_limit</div>
</div>
<div class="a" style="left:509px;top:176px;width:1px;height:22px;background:#dde1e5"></div>
<div class="a" style="left:509px;top:176px;width:100px;height:21px;overflow:hidden">
<div class="t" style="left:7px;top:3.84px;font-size:12.0px;line-height:14px;letter-spacing:0.43px;color:#000">-1</div>
</div>
<div class="a" style="left:609px;top:176px;width:1px;height:22px;background:#dde1e5"></div>
<div class="a" style="left:609px;top:176px;width:75px;height:21px;overflow:hidden">
<div class="t" style="left:7px;top:3.84px;font-size:12.0px;line-height:14px;letter-spacing:0.43px;color:#000"></div>
</div>
<div class="a" style="left:684px;top:176px;width:1px;height:22px;background:#dde1e5"></div>
<div class="a" style="left:684px;top:176px;width:125px;height:21px;overflow:hidden">
<div class="t" style="left:7px;top:3.84px;font-size:12.0px;line-height:14px;letter-spacing:0.43px;color:#000">default</div>
</div>
<div class="a" style="left:809px;top:176px;width:1px;height:22px;background:#dde1e5"></div>
<div class="a" style="left:809px;top:176px;width:620px;height:21px;overflow:hidden">
<div class="t" style="left:8px;top:3.84px;font-size:12.0px;line-height:14px;letter-spacing:0.451px;color:#000">Vacuum cost amount available before napping, for autovacuum.</div>
</div>
<div class="a" style="left:0;top:198px;width:1430px;height:22px;background:#f7f7f7;border-bottom:1px solid #e0e4e8"></div>
<div class="a" style="left:-1px;top:198px;width:310px;height:21px;overflow:hidden">
<div class="t" style="left:7px;top:3.84px;font-size:12.0px;line-height:14px;letter-spacing:0.43px;color:#000">Autovacuum</div>
</div>
<div class="a" style="left:309px;top:198px;width:1px;height:22px;background:#dde1e5"></div>
<div class="a" style="left:309px;top:198px;width:200px;height:21px;overflow:hidden">
<div class="t" style="left:7px;top:3.84px;font-size:12.0px;line-height:14px;letter-spacing:0.43px;color:#000">autovacuum_vacuum_scale_factor</div>
</div>
<div class="a" style="left:509px;top:198px;width:1px;height:22px;background:#dde1e5"></div>
<div class="a" style="left:509px;top:198px;width:100px;height:21px;overflow:hidden">
<div class="t" style="left:7px;top:3.84px;font-size:12.0px;line-height:14px;letter-spacing:0.43px;color:#000">0.2</div>
</div>
<div class="a" style="left:609px;top:198px;width:1px;height:22px;background:#dde1e5"></div>
<div class="a" style="left:609px;top:198px;width:75px;height:21px;overflow:hidden">
<div class="t" style="left:7px;top:3.84px;font-size:12.0px;line-height:14px;letter-spacing:0.43px;color:#000"></div>
</div>
<div class="a" style="left:684px;top:198px;width:1px;height:22px;background:#dde1e5"></div>
<div class="a" style="left:684px;top:198px;width:125px;height:21px;overflow:hidden">
<div class="t" style="left:7px;top:3.84px;font-size:12.0px;line-height:14px;letter-spacing:0.43px;color:#000">default</div>
</div>
<div class="a" style="left:809px;top:198px;width:1px;height:22px;background:#dde1e5"></div>
<div class="a" style="left:809px;top:198px;width:620px;height:21px;overflow:hidden">
<div class="t" style="left:7px;top:3.84px;font-size:12.0px;line-height:14px;letter-spacing:0.471px;color:#000">Number of tuple updates or deletes prior to vacuum as a fraction of reltuples.</div>
</div>
<div class="a" style="left:0;top:220px;width:1430px;height:22px;background:#fff;border-bottom:1px solid #e0e4e8"></div>
<div class="a" style="left:-1px;top:220px;width:310px;height:21px;overflow:hidden">
<div class="t" style="left:7px;top:3.84px;font-size:12.0px;line-height:14px;letter-spacing:0.43px;color:#000">Autovacuum</div>
</div>
<div class="a" style="left:309px;top:220px;width:1px;height:22px;background:#dde1e5"></div>
<div class="a" style="left:309px;top:220px;width:200px;height:21px;overflow:hidden">
<div class="t" style="left:7px;top:3.84px;font-size:12.0px;line-height:14px;letter-spacing:0.43px;color:#000">autovacuum_vacuum_threshold</div>
</div>
<div class="a" style="left:509px;top:220px;width:1px;height:22px;background:#dde1e5"></div>
<div class="a" style="left:509px;top:220px;width:100px;height:21px;overflow:hidden">
<div class="t" style="left:7px;top:3.84px;font-size:12.0px;line-height:14px;letter-spacing:0.43px;color:#000">50</div>
</div>
<div class="a" style="left:609px;top:220px;width:1px;height:22px;background:#dde1e5"></div>
<div class="a" style="left:609px;top:220px;width:75px;height:21px;overflow:hidden">
<div class="t" style="left:7px;top:3.84px;font-size:12.0px;line-height:14px;letter-spacing:0.43px;color:#000"></div>
</div>
<div class="a" style="left:684px;top:220px;width:1px;height:22px;background:#dde1e5"></div>
<div class="a" style="left:684px;top:220px;width:125px;height:21px;overflow:hidden">
<div class="t" style="left:7px;top:3.84px;font-size:12.0px;line-height:14px;letter-spacing:0.43px;color:#000">default</div>
</div>
<div class="a" style="left:809px;top:220px;width:1px;height:22px;background:#dde1e5"></div>
<div class="a" style="left:809px;top:220px;width:620px;height:21px;overflow:hidden">
<div class="t" style="left:7px;top:3.84px;font-size:12.0px;line-height:14px;letter-spacing:0.497px;color:#000">Minimum number of tuple updates or deletes prior to vacuum.</div>
</div>
<div class="a" style="left:0;top:242px;width:1430px;height:22px;background:#f7f7f7;border-bottom:1px solid #e0e4e8"></div>
<div class="a" style="left:-1px;top:242px;width:310px;height:21px;overflow:hidden">
<div class="t" style="left:7px;top:3.84px;font-size:12.0px;line-height:14px;letter-spacing:0.43px;color:#000">Autovacuum</div>
</div>
<div class="a" style="left:309px;top:242px;width:1px;height:22px;background:#dde1e5"></div>
<div class="a" style="left:309px;top:242px;width:200px;height:21px;overflow:hidden">
<div class="t" style="left:7px;top:3.84px;font-size:12.0px;line-height:14px;letter-spacing:0.43px;color:#000">bgwriter_delay</div>
</div>
<div class="a" style="left:509px;top:242px;width:1px;height:22px;background:#dde1e5"></div>
<div class="a" style="left:509px;top:242px;width:100px;height:21px;overflow:hidden">
<div class="t" style="left:7px;top:3.84px;font-size:12.0px;line-height:14px;letter-spacing:0.43px;color:#000">200</div>
</div>
<div class="a" style="left:609px;top:242px;width:1px;height:22px;background:#dde1e5"></div>
<div class="a" style="left:609px;top:242px;width:75px;height:21px;overflow:hidden">
<div class="t" style="left:7px;top:3.84px;font-size:12.0px;line-height:14px;letter-spacing:0.43px;color:#000">ms</div>
</div>
<div class="a" style="left:684px;top:242px;width:1px;height:22px;background:#dde1e5"></div>
<div class="a" style="left:684px;top:242px;width:125px;height:21px;overflow:hidden">
<div class="t" style="left:7px;top:3.84px;font-size:12.0px;line-height:14px;letter-spacing:0.43px;color:#000">default</div>
</div>
<div class="a" style="left:809px;top:242px;width:1px;height:22px;background:#dde1e5"></div>
<div class="a" style="left:809px;top:242px;width:620px;height:21px;overflow:hidden">
<div class="t" style="left:7px;top:3.84px;font-size:12.0px;line-height:14px;letter-spacing:2.530px;color:#000">Background writer sleep time between rounds.</div>
</div>
</div>
<div class="a" style="left:1469px;top:601px;width:17px;height:300px;background:#fff;border-left:1px solid #c6c6c6;border-top:1px solid #c6c6c6"></div>
<svg class="a" style="left:0;top:0;overflow:visible" width="1" height="1"><path d="M1474.0,612.0999999999999 L1477.5,608.5999999999999 L1481.0,612.0999999999999" fill="none" stroke="#606060" stroke-width="1.2"/></svg>
<svg class="a" style="left:0;top:0;overflow:visible" width="1" height="1"><path d="M1474.0,890.7 L1477.5,894.2 L1481.0,890.7" fill="none" stroke="#606060" stroke-width="1.2"/></svg>
<div class="a" style="left:1469px;top:884px;width:17px;height:1px;background:#c6c6c6"></div>
<div class="a" style="left:1469px;top:900px;width:17px;height:1px;background:#c6c6c6"></div>
<div class="a" style="left:1469px;top:618px;width:17px;height:17px;background:#dadada;border:1px solid #a9a9a9"></div>
</div>
<div class="a" style="left:1524px;top:2px;width:17px;height:836px;background:#fff;border-left:1px solid #c6c6c6"></div>
<svg class="a" style="left:0;top:0;overflow:visible" width="1" height="1"><path d="M1529.0,13.100000000000001 L1532.5,9.600000000000001 L1536.0,13.100000000000001" fill="none" stroke="#606060" stroke-width="1.2"/></svg>
<svg class="a" style="left:0;top:0;overflow:visible" width="1" height="1"><path d="M1529.0,827.7 L1532.5,831.2 L1536.0,827.7" fill="none" stroke="#606060" stroke-width="1.2"/></svg>
<div class="a" style="left:1524px;top:821px;width:17px;height:1px;background:#c6c6c6"></div>
<div class="a" style="left:1524px;top:837px;width:17px;height:1px;background:#c6c6c6"></div>
<div class="a" style="left:1524px;top:18px;width:17px;height:705px;background:#dadada;border:1px solid #a9a9a9"></div>
<div class="a" style="left:1529px;top:367px;width:7px;height:2px;background:#6e6e6e"></div>
<div class="a" style="left:1529px;top:370px;width:7px;height:2px;background:#6e6e6e"></div>
<div class="a" style="left:1529px;top:373px;width:7px;height:2px;background:#6e6e6e"></div>
<div class="a" style="left:3px;top:838px;width:1521px;height:17px;background:#fff;border-top:1px solid #c6c6c6;border-bottom:1px solid #c6c6c6"></div>
<div class="a" style="left:19px;top:838px;width:1px;height:17px;background:#c6c6c6"></div>
<div class="a" style="left:1507px;top:838px;width:1px;height:17px;background:#c6c6c6"></div>
<div class="a" style="left:1523px;top:838px;width:1px;height:17px;background:#c6c6c6"></div>
<svg class="a" style="left:0;top:0;overflow:visible" width="1" height="1"><path d="M12.8,843.0 L9.3,846.5 L12.8,850.0" fill="none" stroke="#606060" stroke-width="1.2"/></svg>
<svg class="a" style="left:0;top:0;overflow:visible" width="1" height="1"><path d="M1513.7,843.0 L1517.2,846.5 L1513.7,850.0" fill="none" stroke="#606060" stroke-width="1.2"/></svg>
<div class="a" style="left:1524px;top:838px;width:17px;height:17px;background:#ececec"></div>
<div class="t" style="left:667px;top:861.84px;font-size:12px;line-height:14px;letter-spacing:0.303px;color:#666">Copyright © Condrey Corporation 2016</div>
</body></html>
